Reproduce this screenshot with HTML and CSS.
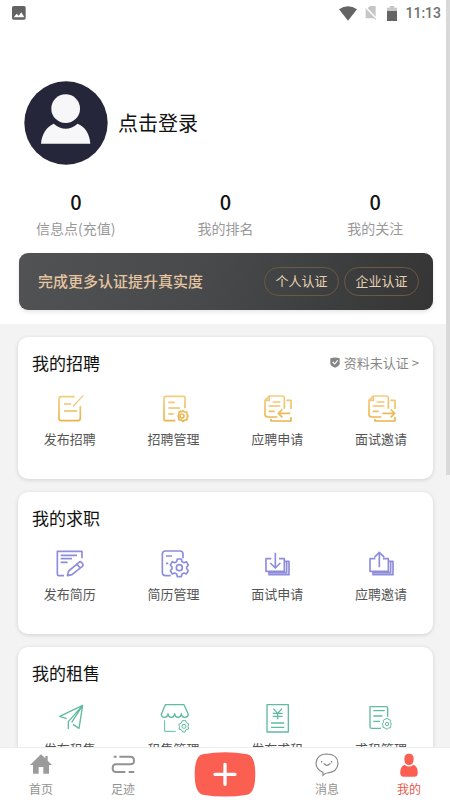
FILE: index.html
```html
<!DOCTYPE html>
<html lang="zh-CN">
<head>
<meta charset="utf-8">
<meta name="viewport" content="width=device-width, initial-scale=1">
<title>我的</title>
<link rel="stylesheet" href="styles.css">
</head>
<body>
<svg class="defs" width="0" height="0" aria-hidden="true">
  <defs>
    <linearGradient id="gold" gradientUnits="userSpaceOnUse" x1="0" y1="0" x2="0" y2="96">
      <stop offset="0" stop-color="#f5d08a"/><stop offset="1" stop-color="#e9b044"/>
    </linearGradient>
  </defs>
</svg>
<div class="app">
  <main class="content">
    <section class="profile">
      <div class="status">
        <svg class="status-photo" viewBox="0 0 42 42" aria-hidden="true"><rect width="41" height="41" rx="5" fill="#636363"/><path d="M5 34l9-11 6 6 8-10 9 15z" fill="#fff"/></svg>
        <div class="status-right">
          <svg class="status-wifi" viewBox="0 0 54 45" aria-hidden="true"><path d="M0 10Q27-8 54 10L27 44z" fill="#646464"/></svg>
          <svg class="status-sim" viewBox="0 0 36 42" aria-hidden="true"><path d="M14 0H32V32L8 7zM0 5l34 35-2 2-5-5H2V11z" fill="#c6c6c6"/></svg>
          <svg class="status-battery" viewBox="0 0 30 45" aria-hidden="true"><path d="M0 5H8V0H22V5H30V16H0z" fill="#c8c8c8"/><path d="M0 15H30V45H0z" fill="#646464"/></svg>
          <span class="time">11:13</span>
        </div>
      </div>
      <a class="login" href="#login">
        <svg class="avatar" viewBox="0 0 252 252" aria-hidden="true"><circle cx="126" cy="126" r="125" fill="#25263a"/><circle cx="125" cy="83" r="43" fill="#f7f7f9"/><path d="M51 188C53 160 67 138 89 128Q125 158 161 128C185 138 197 160 199 188z" fill="#f7f7f9"/></svg>
        <span>点击登录</span>
      </a>
      <div class="stats">
        <a href="#points"><b>0</b><span>信息点(充值)</span></a>
        <a href="#rank"><b>0</b><span>我的排名</span></a>
        <a href="#follow"><b>0</b><span>我的关注</span></a>
      </div>
      <div class="banner">
        <strong>完成更多认证提升真实度</strong>
        <button type="button">个人认证</button>
        <button type="button">企业认证</button>
      </div>
    </section>

    <section class="card">
      <header>
        <h2>我的招聘</h2>
        <a class="verify" href="#verify"><svg viewBox="0 0 30 33" aria-hidden="true"><path d="M1 4Q15-1 29 4V20Q29 26 15 32Q1 26 1 20z" fill="#858585"/><path d="M8 15l6 6L23 10" fill="none" stroke="#fff" stroke-width="3.5"/></svg>资料未认证 &gt;</a>
      </header>
      <div class="grid gold">
        <a href="#r1"><svg viewBox="0 0 96 96" aria-hidden="true"><path d="M62 14H22Q15 14 15 21V79Q15 86 22 86H71Q79 86 79 79V42"/><path d="M30 36H51M30 57H69"/><path d="M57 43L88 10" stroke-width="4"/></svg><span>发布招聘</span></a>
        <a href="#r2"><svg viewBox="0 0 96 96" aria-hidden="true"><path d="M81 49V17Q81 13 76 13H22Q18 13 18 18V80Q18 86 23 86H52"/><path d="M31 31H50M31 48H66M31 66H47"/><path d="M65 56l5 4 5-4 5 4h7v7l3 5-3 5v7h-7l-5 4-5-4h-7v-7l-3-5 3-5v-7h7"/><circle cx="72" cy="72" r="6"/></svg><span>招聘管理</span></a>
        <a href="#r3"><svg viewBox="0 0 96 96" aria-hidden="true"><path d="M70 50V19Q70 12 63 12H25L12 25V67Q12 75 20 75H49M25 12V25H12"/><path d="M35 30H58M23 42H58M23 58H41M76 25H90V51M30 81V87H90V75"/><path d="M88 64H52M64 52L52 64L64 76"/></svg><span>应聘申请</span></a>
        <a href="#r4"><svg viewBox="0 0 96 96" aria-hidden="true"><path d="M70 50V19Q70 12 63 12H25L12 25V67Q12 75 20 75H49M25 12V25H12"/><path d="M35 30H58M23 42H58M23 58H41M76 25H90V51M30 81V87H90V75"/><path d="M52 64H89M77 52L89 64L77 76"/></svg><span>面试邀请</span></a>
      </div>
    </section>

    <section class="card">
      <header><h2>我的求职</h2></header>
      <div class="grid violet">
        <a href="#j1"><svg viewBox="0 0 96 96" aria-hidden="true"><path d="M30 86H14Q10 86 10 81V13H84V34"/><path d="M20 25H69M20 35H54M20 46H41"/><path d="M40 86L44 72L75 46Q78 42 82 46L86 50Q89 54 85 58L54 83zM69 52L79 63"/></svg><span>发布简历</span></a>
        <a href="#j2"><svg viewBox="0 0 96 96" aria-hidden="true"><path d="M75 34V21Q75 12 66 12H23Q13 12 13 21V76Q13 86 23 86H38M24 27H42M24 49H31"/><path d="M58 36h12l2 8 6 3 7-3 6 10-5 6v5l5 6-6 10-7-3-6 3-2 8H58l-2-8-6-3-7 3-6-10 5-6v-5l-5-6 6-10 7 3 6-3z"/><circle cx="64" cy="62" r="9"/></svg><span>简历管理</span></a>
        <a href="#j3"><svg viewBox="0 0 96 96" aria-hidden="true"><path d="M31 35H15V73H70V35H54M24 75V83H84V43H72M77 43V77H24"/><path d="M43 17V62M28 48L43 63L58 48"/></svg><span>面试申请</span></a>
        <a href="#j4"><svg viewBox="0 0 96 96" aria-hidden="true"><path d="M31 35H15V73H70V35H54M24 75V83H84V43H72M77 43V77H24"/><path d="M43 61V16M28 31L43 16L58 31"/></svg><span>应聘邀请</span></a>
      </div>
    </section>

    <section class="card">
      <header><h2>我的租售</h2></header>
      <div class="grid green">
        <a href="#s1"><svg viewBox="0 0 96 96" aria-hidden="true"><path d="M38 50L17 43L86 10L75 79L57 67M86 10L43 59V81M86 10L53 61"/></svg><span>发布租售</span></a>
        <a href="#s2"><svg viewBox="0 0 96 96" aria-hidden="true"><path d="M22 8H78L91 37Q90 46 80 46Q71 46 70 35Q69 46 60 46Q51 46 50 35Q49 46 40 46Q31 46 30 35Q29 46 20 46Q10 46 10 37z"/><path d="M20 55V88H53" stroke-width="3"/><path d="M73 56h10l2 6 7 3-2 9 2 7-8 2-3 7H74l-3-6-8-3 2-7-3-7 8-4z" stroke-width="3"/><circle cx="78" cy="73" r="6" stroke-width="3"/></svg><span>租售管理</span></a>
        <a href="#s3"><svg viewBox="0 0 96 96" aria-hidden="true"><rect x="18" y="8" width="64" height="82"/><path d="M37 20L50 34L63 20M50 34V52M35 34H65M35 43H65M30 63H70M30 76H70"/></svg><span>发布求租</span></a>
        <a href="#s4"><svg viewBox="0 0 96 96" aria-hidden="true"><path d="M68 44V19Q68 14 63 14H15V74Q15 79 20 79H48"/><path d="M25 26H59M25 42H52M25 58H45"/><path d="M60 52l6-3 6 4 5 2v7l2 4-2 5v6l-6 1-5 4-6-4-6-2v-6l-2-4 3-5v-6z" stroke-width="3"/><circle cx="66" cy="66" r="5" stroke-width="3"/></svg><span>求租管理</span></a>
      </div>
    </section>
  </main>

  <nav class="tabs">
    <a href="#home"><svg viewBox="0 0 72 72" aria-hidden="true"><path d="M36 4L3 36H12V62H29V42H43V62H60V36H69L56 23V9H49V16z" fill="#9b9b9b"/></svg><span>首页</span></a>
    <a href="#track"><svg viewBox="0 0 72 72" aria-hidden="true"><path d="M8 11H17M25 11H58Q69 11 69 23Q69 34 58 34H15Q5 34 5 46Q5 57 15 57H43M53 57H70" fill="none" stroke="#929292" stroke-width="6"/></svg><span>足迹</span></a>
    <button type="button" class="add" aria-label="发布"><svg viewBox="0 0 186 135" aria-hidden="true"><path d="M26 7Q93-5 160 7Q184 12 184 66Q184 122 160 128Q93 139 26 128Q2 122 2 66Q2 12 26 7z" fill="#fa5f51"/><path d="M93 37V97M63 67H123" stroke="#fff" stroke-width="10" stroke-linecap="round"/></svg></button>
    <a href="#messages"><svg viewBox="0 0 72 72" aria-hidden="true"><path d="M24 58Q3 50 3 31Q5 3 36 3Q68 4 69 31Q68 58 36 60Q31 60 24 67z" fill="none" stroke="#888" stroke-width="3.5"/><path d="M27 32Q36 42 45 32M20 25v2M50 25v2" fill="none" stroke="#888" stroke-width="4" stroke-linecap="round"/></svg><span>消息</span></a>
    <a class="active" href="#me" aria-current="page"><svg viewBox="0 0 72 72" aria-hidden="true"><path d="M36 2Q50 2 50 18Q50 36 36 36Q22 36 22 18Q22 2 36 2zM22 35Q36 46 50 35Q64 43 62 62Q61 71 52 71H20Q11 71 10 62Q8 43 22 35z" fill="#fa5f51"/></svg><span>我的</span></a>
  </nav>
  <div class="scroll-thumb"></div>
</div>
</body>
</html>
```
FILE: styles.css
```css
* { box-sizing: border-box; }
body {
  margin: 0;
  font-family: "Noto Sans CJK SC", sans-serif;
  color: #111;
  background: #f3f3f3;
}
a { color: inherit; text-decoration: none; }
button { padding: 0; border: 0; background: none; font: inherit; cursor: pointer; }
svg { display: block; }
.defs { position: absolute; }
.app {
  position: relative;
  height: 100vh;
  display: flex;
  flex-direction: column;
}
.content {
  flex: 1;
  min-height: 0;
  overflow-y: auto;
  scrollbar-width: none;
}
.profile { background: #fff; padding-bottom: 14px; margin-bottom: 13px; }

.status {
  display: flex;
  align-items: center;
  justify-content: space-between;
  height: 26px;
  padding: 0 9px 0 12px;
}
.status-right { display: flex; align-items: center; }
.status-photo { width: 14px; height: 14px; }
.status-wifi { width: 18px; height: 15px; margin-right: 8px; }
.status-sim { width: 12px; height: 14px; margin-right: 10px; }
.status-battery { width: 10px; height: 15px; margin-right: 8px; }
.time { font: 500 14px/26px Roboto, sans-serif; color: #707070; }

.login {
  display: flex;
  align-items: center;
  gap: 10px;
  padding: 55px 24px 0;
  font-size: 20px;
  line-height: 32px;
}
.avatar { width: 84px; height: 84px; }

.stats {
  display: grid;
  grid-template-columns: repeat(3, 1fr);
  padding: 23px 0 12px 1px;
  text-align: center;
}
.stats a { display: flex; flex-direction: column; }
.stats b { font-size: 20px; line-height: 28px; font-weight: 500; }
.stats span { font-size: 14px; line-height: 25px; color: #999; }

.banner {
  display: flex;
  align-items: center;
  gap: 5px;
  height: 57px;
  margin: 0 17px 0 19px;
  padding: 0 14px 0 19px;
  border-radius: 9px;
  background: linear-gradient(105deg, #505254, #47494b 45%, #353535);
  box-shadow: 0 2px 4px rgba(0, 0, 0, .1);
}
.banner strong {
  flex: 1;
  padding-bottom: 2px;
  font-size: 15px;
  font-weight: 500;
  color: #e5c5a0;
  white-space: nowrap;
}
.banner button {
  width: 75px;
  height: 29px;
  padding-bottom: 2px;
  border: 1px solid #6b5b40;
  border-radius: 15px;
  font-size: 13px;
  line-height: 24px;
  color: #e6d2b3;
}

.card {
  margin: 0 17px 13px 18px;
  padding-bottom: 30px;
  border-radius: 10px;
  background: #fff;
  box-shadow: 0 1px 4px rgba(0, 0, 0, .14);
}
.card header {
  display: flex;
  align-items: center;
  justify-content: space-between;
  height: 50px;
  padding: 0 14px;
}
.card h2 { margin: 0; font-size: 17px; font-weight: 400; }
.verify { display: flex; align-items: center; gap: 4px; font-size: 13px; color: #888; }
.verify svg { width: 10px; height: 11px; }
.grid { display: grid; grid-template-columns: repeat(4, 1fr); padding-top: 5px; }
.grid a {
  display: flex;
  flex-direction: column;
  align-items: center;
  gap: 5px;
  font-size: 13px;
  line-height: 20px;
  color: #555;
}
.grid svg { width: 32px; height: 32px; fill: none; stroke-width: 5; stroke-linejoin: round; }
.gold svg { stroke: url(#gold); }
.violet svg { stroke: #8f8ddb; }
.green svg { stroke: #5fbc9f; stroke-width: 4; }

.tabs {
  display: grid;
  grid-template-columns: 1fr 1fr 122px 1fr 1fr;
  align-items: center;
  height: 53px;
  border-top: 1px solid #ececec;
  background: #fff;
  font-size: 12px;
  line-height: 18px;
  color: #929292;
}
.tabs a { display: flex; flex-direction: column; align-items: center; gap: 3px; padding-top: 2px; }
.tabs a svg { width: 24px; height: 24px; }
.tabs .active { color: #e9574b; }
.add { justify-self: center; }
.add svg { width: 62px; height: 45px; }

.scroll-thumb {
  position: absolute;
  top: 0;
  right: 0;
  width: 4px;
  height: 475px;
  background: #d9d9d9;
}
```
